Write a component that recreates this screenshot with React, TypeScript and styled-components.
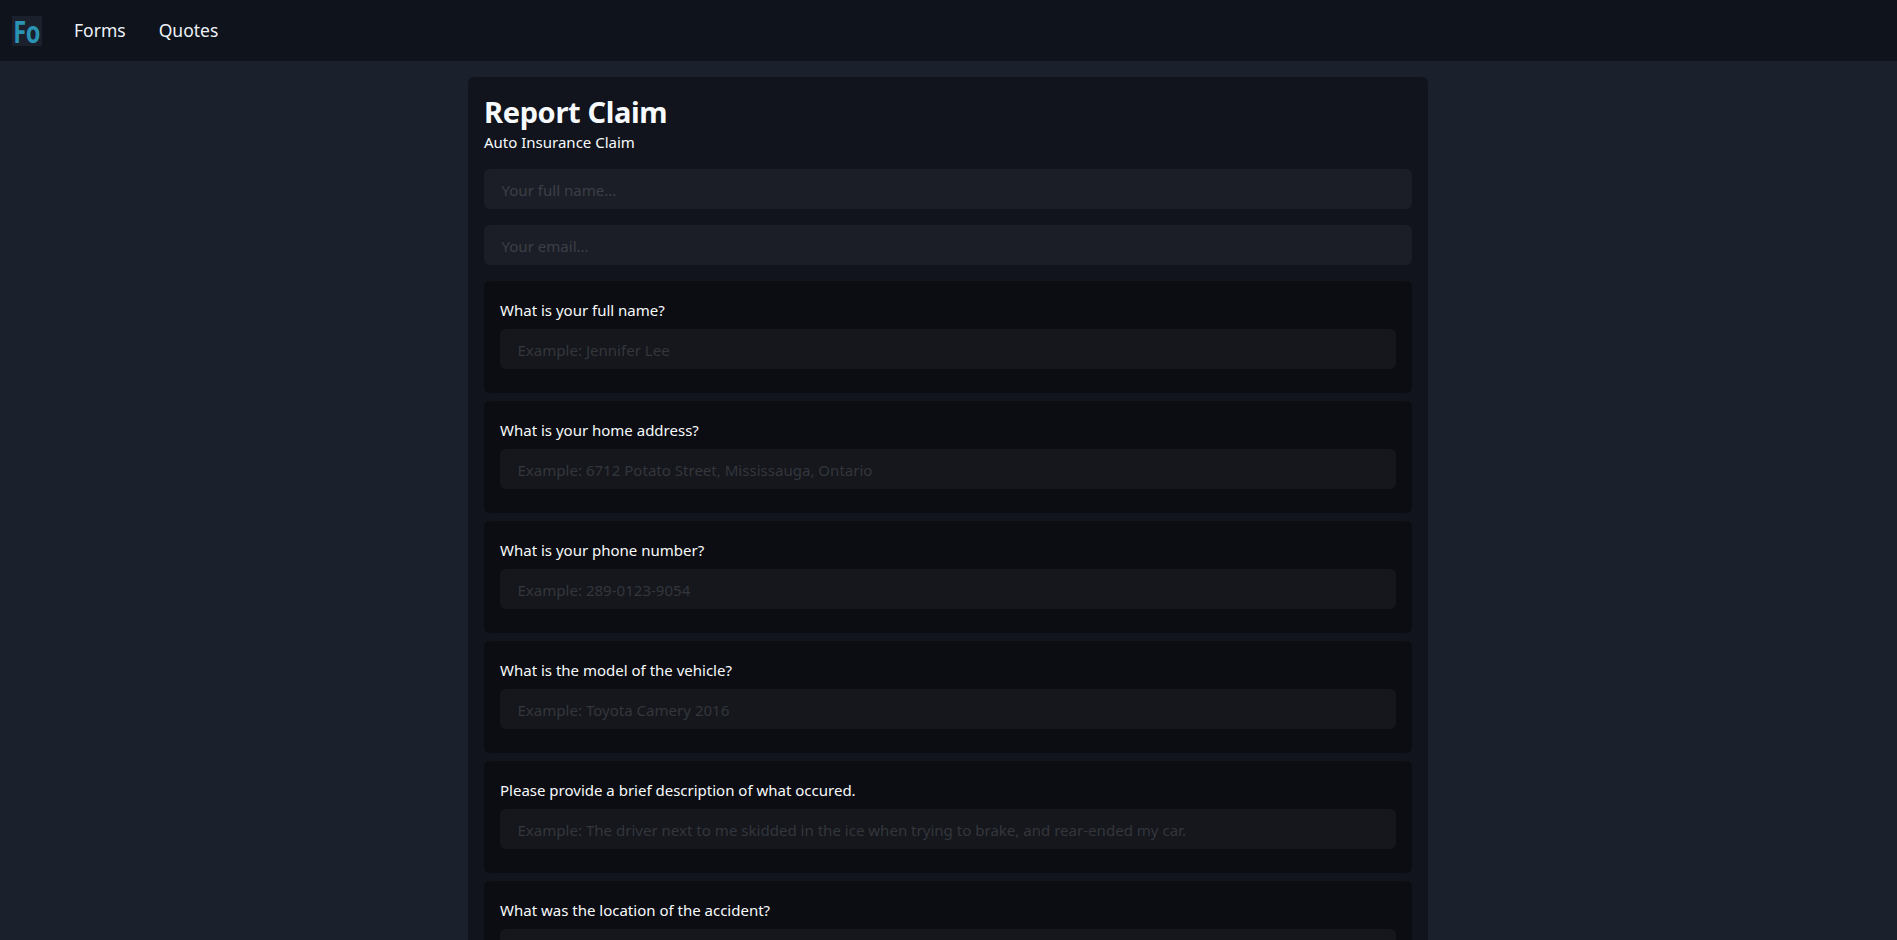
import React from "react";
import styled, { createGlobalStyle } from "styled-components";

const fontStack = `"Noto Sans", "Open Sans", sans-serif`;

const GlobalStyle = createGlobalStyle`
  html, body {
    margin: 0;
    padding: 0;
    background: #1a202c;
    font-family: ${fontStack};
    color: #f7fafc;
  }
  html {
    overflow: hidden;
    height: 940px;
  }
  * {
    box-sizing: border-box;
  }
`;

const Navbar = styled.nav`
  display: flex;
  align-items: center;
  gap: 32px;
  height: 61px;
  padding: 0 12px;
  background: #0f131c;
`;

const Logo = styled.div`
  width: 30px;
  height: 30px;
  display: flex;
  align-items: center;
  justify-content: center;
  background: #1a202c;
`;

const LogoText = styled.span`
  color: #2a92b2;
  font-family: "Noto Sans", sans-serif;
  font-weight: 700;
  font-size: 31px;
  line-height: 30px;
  letter-spacing: -0.5px;
  transform: scaleX(0.76);
`;

const NavLinks = styled.div`
  display: flex;
  gap: 33px;
  margin-bottom: 2px;
`;

const NavLink = styled.a`
  color: #edf2f7;
  font-size: 17.5px;
  line-height: 24px;
`;

const Main = styled.main`
  display: flex;
  justify-content: center;
  padding: 16px 1px 0 0;
`;

const Card = styled.section`
  width: 960px;
  padding: 16px;
  border-radius: 6px;
  background: #11141c;
`;

const Title = styled.h1`
  margin: 0;
  padding-top: 1px;
  font-size: 29px;
  line-height: 36px;
  font-weight: 700;
  letter-spacing: -0.35px;
  color: #f7fafc;
`;

const Subtitle = styled.p`
  margin: 0 0 15px;
  font-size: 15px;
  line-height: 24px;
`;

const Input = styled.input<{ $tone?: "card" | "question" }>`
  display: block;
  width: 100%;
  height: 40px;
  padding: 2px 17.5px 0;
  border: 0;
  border-radius: 6px;
  outline: 0;
  font-family: ${fontStack};
  font-size: 15.05px;
  background: ${(p) => (p.$tone === "question" ? "#15171d" : "#1b1e26")};
  color: #f7fafc;

  &::placeholder {
    color: ${(p) => (p.$tone === "question" ? "#33363c" : "#3b3e47")};
    opacity: 1;
  }
`;

const ContactFields = styled.div`
  display: flex;
  flex-direction: column;
  gap: 16px;
  margin-bottom: 16px;
`;

const Questions = styled.div`
  display: flex;
  flex-direction: column;
  gap: 8px;
`;

const Question = styled.div`
  height: 112px;
  padding: 16px;
  border-radius: 6px;
  background: #0c0d12;
`;

const QuestionLabel = styled.label`
  display: block;
  margin-bottom: 7px;
  padding-top: 1px;
  font-size: 15px;
  line-height: 24px;
`;

const questions = [
  { label: "What is your full name?", example: "Example: Jennifer Lee" },
  { label: "What is your home address?", example: "Example: 6712 Potato Street, Mississauga, Ontario" },
  { label: "What is your phone number?", example: "Example: 289-0123-9054" },
  { label: "What is the model of the vehicle?", example: "Example: Toyota Camery 2016" },
  {
    label: "Please provide a brief description of what occured.",
    example: "Example: The driver next to me skidded in the ice when trying to brake, and rear-ended my car.",
  },
  { label: "What was the location of the accident?", example: "Example: Highway 401" },
];

export default function App() {
  return (
    <>
      <GlobalStyle />
      <Navbar>
        <Logo>
          <LogoText>Fo</LogoText>
        </Logo>
        <NavLinks>
          <NavLink>Forms</NavLink>
          <NavLink>Quotes</NavLink>
        </NavLinks>
      </Navbar>
      <Main>
        <Card>
          <Title>Report Claim</Title>
          <Subtitle>Auto Insurance Claim</Subtitle>
          <ContactFields>
            <Input placeholder="Your full name..." />
            <Input placeholder="Your email..." />
          </ContactFields>
          <Questions>
            {questions.map((q) => (
              <Question key={q.label}>
                <QuestionLabel>{q.label}</QuestionLabel>
                <Input $tone="question" placeholder={q.example} />
              </Question>
            ))}
          </Questions>
        </Card>
      </Main>
    </>
  );
}
